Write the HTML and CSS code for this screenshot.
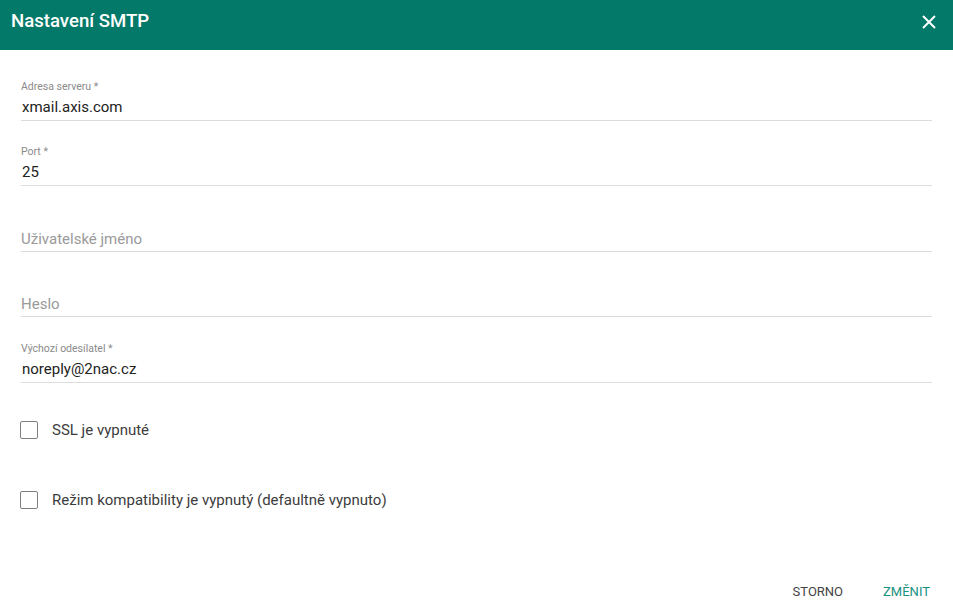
FILE: index.html
```html
<!DOCTYPE html>
<html lang="cs">
<head>
<meta charset="utf-8">
<title>Nastavení SMTP</title>
<link rel="stylesheet" href="styles.css">
</head>
<body>
<div class="dialog">
  <header class="dialog-header">
    <h1 class="dialog-title">Nastavení SMTP</h1>
    <button class="close-btn" aria-label="Zavřít">
      <svg width="14" height="14" viewBox="0 0 14 14"><path d="M1 1L13 13M13 1L1 13" stroke="#fff" stroke-width="2" fill="none"/></svg>
    </button>
  </header>
  <div class="dialog-body">
    <div class="field">
      <div class="field-label">Adresa serveru *</div>
      <div class="field-value">xmail.axis.com</div>
    </div>
    <div class="field">
      <div class="field-label">Port *</div>
      <div class="field-value">25</div>
    </div>
    <div class="field">
      <div class="field-value placeholder">Uživatelské jméno</div>
    </div>
    <div class="field">
      <div class="field-value placeholder">Heslo</div>
    </div>
    <div class="field">
      <div class="field-label">Výchozí odesílatel *</div>
      <div class="field-value">noreply@2nac.cz</div>
    </div>
    <div class="checks">
      <label class="check-row"><span class="box"></span><span class="check-text">SSL je vypnuté</span></label>
      <label class="check-row"><span class="box"></span><span class="check-text">Režim kompatibility je vypnutý (defaultně vypnuto)</span></label>
    </div>
  </div>
  <footer class="dialog-actions">
    <button class="btn btn-cancel">Storno</button>
    <button class="btn btn-primary">Změnit</button>
  </footer>
</div>
</body>
</html>
```
FILE: styles.css
```css
html, body {
  margin: 0;
  padding: 0;
  background: #fff;
}
body {
  font-family: Roboto, "Liberation Sans", Arial, sans-serif;
  width: 953px;
  height: 612px;
  overflow: hidden;
}
.dialog {
  display: flex;
  flex-direction: column;
  height: 612px;
}
.dialog-header {
  height: 50px;
  box-sizing: border-box;
  background: #037969;
  display: flex;
  align-items: flex-start;
  justify-content: space-between;
  padding: 9px 17px 0 11px;
}
.dialog-title {
  margin: 0;
  font-size: 18.6px;
  line-height: 24px;
  font-weight: 500;
  color: #fff;
}
.close-btn {
  background: none;
  border: 0;
  padding: 0;
  margin-top: 6px;
  width: 14px;
  height: 14px;
  display: flex;
  cursor: pointer;
}
.dialog-body {
  padding: 5px 21px 0 21px;
  display: flex;
  flex-direction: column;
}
.field {
  height: 65.5px;
  box-sizing: border-box;
  display: flex;
  flex-direction: column;
  justify-content: flex-end;
  border-bottom: 1px solid #dcdcdc;
  padding-bottom: 3px;
}
.field-label {
  font-size: 10.5px;
  line-height: 12px;
  color: #8a8a8a;
  margin-bottom: 4px;
}
.field-value {
  font-size: 15px;
  line-height: 20px;
  color: #222;
  padding-left: 1px;
}
.field-value.placeholder {
  color: #9a9a9a;
  padding-left: 0;
  margin-bottom: -1px;
}
.checks {
  margin-top: 12.5px;
  display: flex;
  flex-direction: column;
}
.check-row {
  height: 70px;
  display: flex;
  align-items: center;
  gap: 13px;
}
.box {
  width: 18px;
  height: 18px;
  box-sizing: border-box;
  border: 1.5px solid #808080;
  border-radius: 2px;
  margin-left: -1px;
  margin-right: 1px;
}
.check-text {
  font-size: 15px;
  color: #3c3c3c;
}
.dialog-actions {
  margin-top: auto;
  display: flex;
  justify-content: flex-end;
  gap: 24px;
  padding: 0 15px 0 0;
  height: 36px;
  margin-bottom: 3px;
}
.btn {
  background: none;
  border: 0;
  padding: 0 8px;
  height: 36px;
  font-family: Roboto, "Liberation Sans", Arial, sans-serif;
  font-size: 13px;
  text-transform: uppercase;
  cursor: pointer;
}
.btn-cancel {
  color: #444;
}
.btn-primary {
  color: #17917f;
}
```
